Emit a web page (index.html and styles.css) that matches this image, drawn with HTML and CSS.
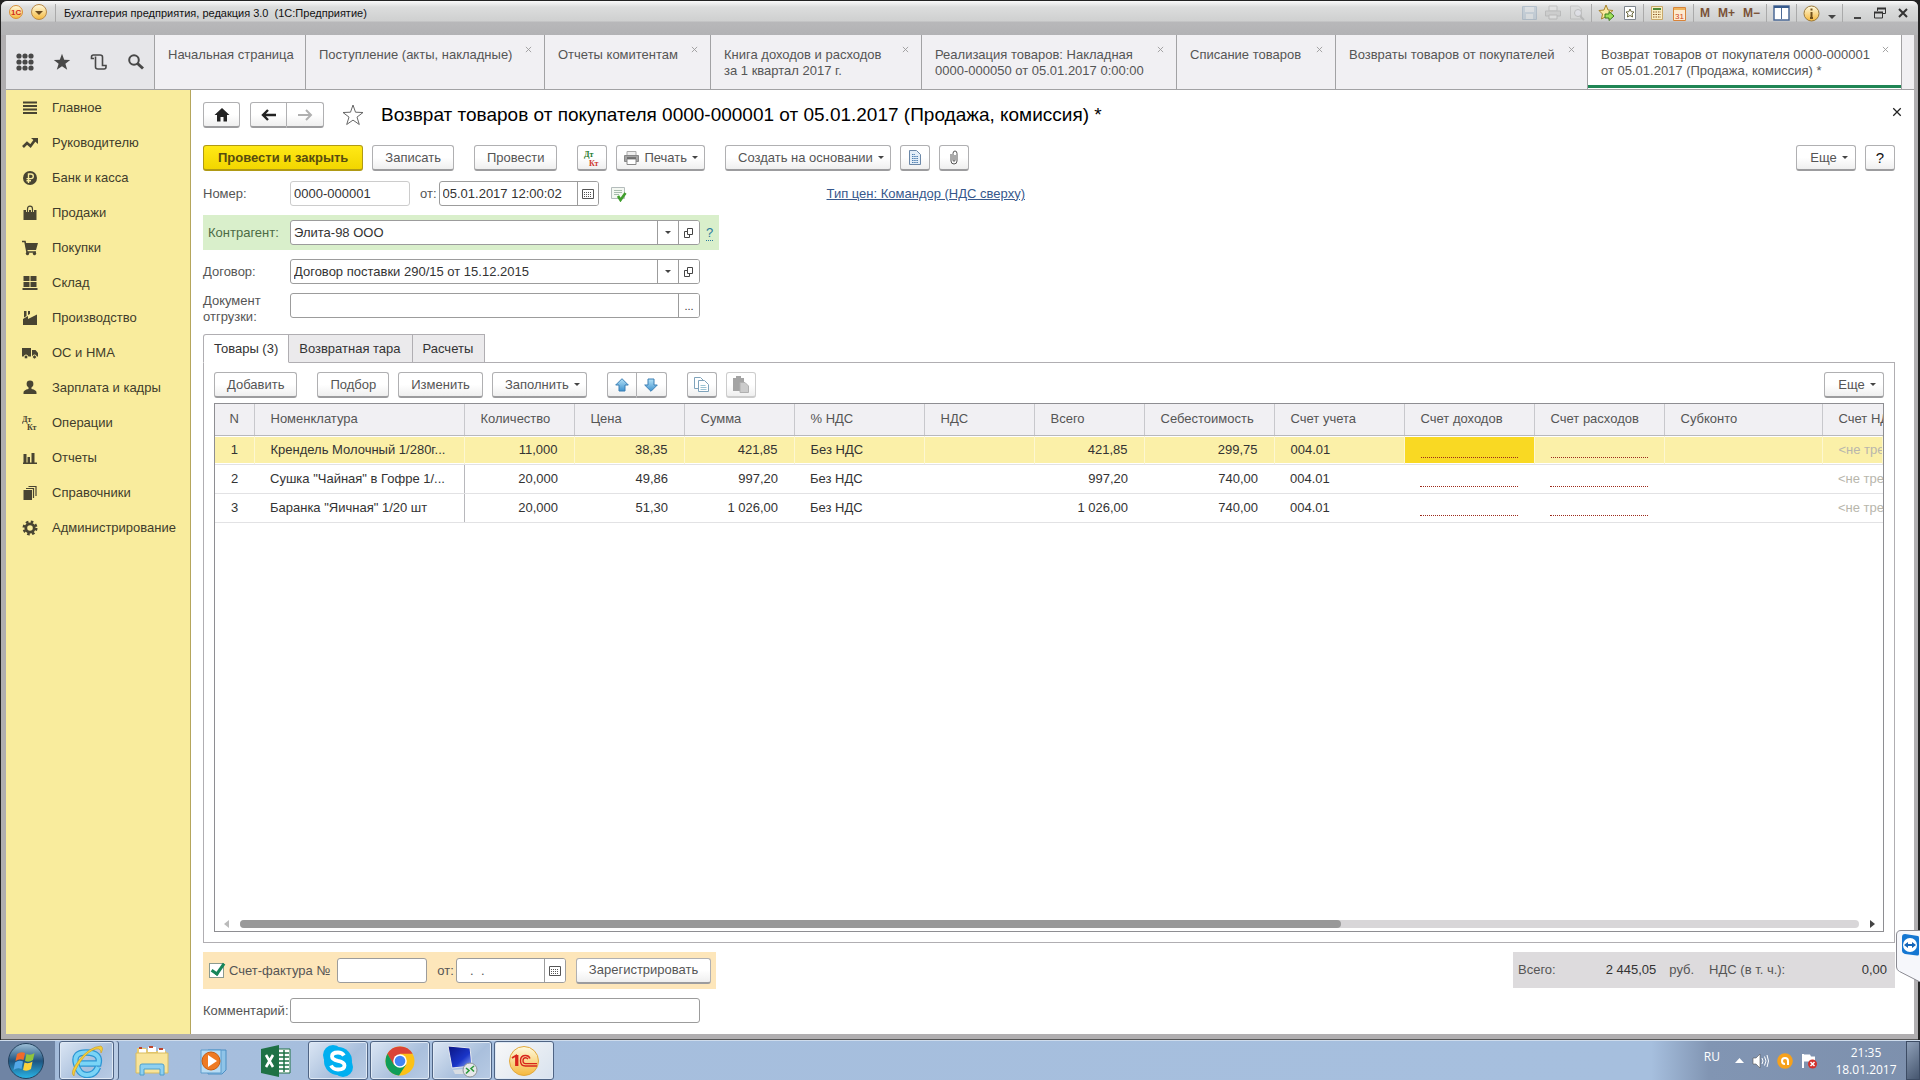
FILE: index.html
```html
<!DOCTYPE html>
<html lang="ru">
<head>
<meta charset="utf-8">
<title>Бухгалтерия предприятия, редакция 3.0</title>
<link rel="stylesheet" href="styles.css">
</head>
<body>
<svg class="defs" aria-hidden="true">
  <defs>
    <linearGradient id="gold" x1="0" y1="0" x2="0" y2="1"><stop offset="0" stop-color="#fffbe0"/><stop offset="1" stop-color="#f5b83c"/></linearGradient>
    <linearGradient id="orb" x1="0" y1="0" x2="0" y2="1"><stop offset="0" stop-color="#9fc0d8"/><stop offset=".5" stop-color="#1f5480"/><stop offset="1" stop-color="#29b6e8"/></linearGradient>
    <linearGradient id="arrow" x1="0" y1="0" x2="0" y2="1"><stop offset="0" stop-color="#b5e2f7"/><stop offset="1" stop-color="#3f93cf"/></linearGradient>
    <linearGradient id="screen" x1="0" y1="0" x2="1" y2="1"><stop offset="0" stop-color="#0a1480"/><stop offset=".6" stop-color="#1a35c8"/><stop offset="1" stop-color="#9db6f5"/></linearGradient>
    <symbol id="i-cal" viewBox="0 0 12 12"><path d="M.5 1.500h11v9H.5z" fill="#fff" stroke="#555"/><path d="M2 4.500h8M2 6.500h8M2 8.500h8" stroke="#555" stroke-dasharray="1 1"/></symbol>
    <symbol id="i-open" viewBox="0 0 10 12"><path d="M3.500 1.500h5v6h-5zM3 4.500H.5v6h5V8" fill="none" stroke="#444"/></symbol>
    <symbol id="i-x" viewBox="0 0 8 8"><path d="M1 1l6 6M7 1L1 7" fill="none" stroke="currentColor"/></symbol>
  </defs>
</svg>

<div class="window">
  <header class="titlebar">
    <svg width="14" height="16" viewBox="0 0 14 16"><circle cx="7" cy="8" r="6.500" fill="url(#gold)" stroke="#d9903a"/><text x="2" y="11" class="logo-s">1С</text></svg>
    <svg width="16" height="16" viewBox="0 0 16 16"><circle cx="8" cy="8" r="7.500" fill="url(#gold)" stroke="#b98a4a"/><path d="M4 7h8l-4 4z" fill="#6a4a20"/></svg>
    <i class="sep"></i>
    <h1 class="app-title">Бухгалтерия предприятия, редакция 3.0&nbsp; (1С:Предприятие)</h1>
    <div class="sys">
      <svg class="dim" width="15" height="16" viewBox="0 0 15 16"><path d="M.5 1.500h14v13H.5z" fill="#9fb8d0" stroke="#6d8cab"/><path d="M3 2h9v5H3zM4 9h7v5H4z" fill="#dfe7ee"/></svg>
      <svg class="dim" width="16" height="16" viewBox="0 0 16 16"><path d="M4 1h8v5H4z" fill="#eee" stroke="#888"/><path d="M.5 6h15v5H.5z" fill="#bbb" stroke="#888"/><path d="M4 10h8v4H4z" fill="#eee" stroke="#888"/></svg>
      <svg class="dim" width="16" height="16" viewBox="0 0 16 16"><path d="M1.500 1h8l3 3v10h-11z" fill="#ddd" stroke="#999"/><circle cx="9" cy="8" r="3.500" fill="#eef" stroke="#888"/><path d="M11 11l4 4" stroke="#888" stroke-width="2"/></svg>
      <i class="sep"></i>
      <svg width="17" height="18" viewBox="0 0 17 18"><path d="M8 1l2 5 5 .5-4 3.500 1 5-4-2.500L3.500 15l1-5L1 6.500 6 6z" fill="#fbe9a0" stroke="#a8842c"/><path d="M7 10h4V7.500l5 4.500-5 4.500V14H7z" fill="#9fe05a" stroke="#3c7a1c"/></svg>
      <svg width="14" height="16" viewBox="0 0 14 16"><path d="M1.500 1.500h11v13h-11z" fill="#fff" stroke="#7e868e"/><path d="M7 4l1.200 2.700 2.800.3-2 2 .6 3L7 10.500 4.400 12 5 9 3 7l2.800-.3z" fill="none" stroke="#6c6a40"/></svg>
      <i class="sep"></i>
      <svg width="14" height="16" viewBox="0 0 14 16"><path d="M1.500 1.500h11v13h-11z" fill="#fbeec4" stroke="#c8a86a"/><path d="M3 4h8" stroke="#4f8a38" stroke-width="2"/><path d="M3 7h8M3 9.500h8M3 12h8" stroke="#8a5a2a" stroke-dasharray="1.500 1"/></svg>
      <svg width="15" height="17" viewBox="0 0 15 17"><path d="M1.500 2.500h12v13h-12z" fill="#fdebd0" stroke="#d8843a"/><path d="M2 3h11v2H2z" fill="#f0b45c"/><text x="3" y="14" class="cal-num">31</text></svg>
      <i class="sep"></i>
      <span class="mem">M</span><span class="mem">M+</span><span class="mem">M−</span>
      <i class="sep"></i>
      <svg width="17" height="16" viewBox="0 0 17 16"><path d="M1 1h15v14H1z" fill="#fff" stroke="#4c6a96" stroke-width="1.500"/><path d="M1 2h15" stroke="#35598c" stroke-width="2"/><path d="M8.500 3v11" stroke="#4c6a96"/></svg>
      <i class="sep"></i>
      <svg width="17" height="17" viewBox="0 0 17 17"><circle cx="8.500" cy="8.500" r="7.500" fill="url(#gold)" stroke="#9c7a3c"/><path d="M8.500 3.500v2M8.500 7v6M7 13h3" stroke="#70501c" stroke-width="2"/></svg>
      <svg width="8" height="16" viewBox="0 0 8 16"><path d="M0 10h8l-4 4z" fill="#444"/></svg>
      <i class="sep"></i>
      <div class="winbtns">
        <svg width="10" height="14" viewBox="0 0 10 14"><path d="M1 12h7" stroke="#444" stroke-width="2"/></svg>
        <svg width="12" height="12" viewBox="0 0 12 12"><path d="M3.500 4V1.500h8v5H9" fill="none" stroke="#333"/><path d="M3 1.500h9M0 5.500h9" stroke="#333" stroke-width="2"/><path d="M.5 5v6h8V5" fill="none" stroke="#333"/></svg>
        <svg width="12" height="12" viewBox="0 0 12 12"><path d="M2 2l8 8M10 2l-8 8" stroke="#333" stroke-width="2"/></svg>
      </div>
    </div>
  </header>

  <nav class="tabs">
    <div class="tools">
      <svg width="18" height="18" viewBox="0 0 18 18"><g fill="#484848"><circle cx="3" cy="3" r="2.600"/><circle cx="9" cy="3" r="2.600"/><circle cx="15" cy="3" r="2.600"/><circle cx="3" cy="9" r="2.600"/><circle cx="9" cy="9" r="2.600"/><circle cx="15" cy="9" r="2.600"/><circle cx="3" cy="15" r="2.600"/><circle cx="9" cy="15" r="2.600"/><circle cx="15" cy="15" r="2.600"/></g></svg>
      <svg width="18" height="18" viewBox="0 0 18 18"><path d="M9 .8l2.200 5.900 6 .2-4.800 3.800 1.800 6.100L9 13.300l-5.200 3.500 1.800-6.100L.8 6.900l6-.2z" fill="#484848"/></svg>
      <svg width="18" height="18" viewBox="0 0 18 18"><path d="M4 5.500H1.500V4q0-2 2-2H10q2.500 0 2.500 2v8.500H16V14q0 2-2 2H8q-2.500 0-2.500-2V3.500" fill="none" stroke="#484848" stroke-width="1.600"/></svg>
      <svg width="18" height="18" viewBox="0 0 18 18"><circle cx="7" cy="7" r="4.800" fill="none" stroke="#484848" stroke-width="2"/><path d="M10.500 10.500l5.500 5" stroke="#484848" stroke-width="3"/></svg>
    </div>
    <a class="tab" href="#">Начальная страница</a>
    <a class="tab" href="#">Поступление (акты, накладные)<svg class="tab-x"><use href="#i-x"/></svg></a>
    <a class="tab" href="#">Отчеты комитентам<svg class="tab-x"><use href="#i-x"/></svg></a>
    <a class="tab" href="#">Книга доходов и расходов<br>за 1 квартал 2017 г.<svg class="tab-x"><use href="#i-x"/></svg></a>
    <a class="tab" href="#">Реализация товаров: Накладная<br>0000-000050 от 05.01.2017 0:00:00<svg class="tab-x"><use href="#i-x"/></svg></a>
    <a class="tab" href="#">Списание товаров<svg class="tab-x"><use href="#i-x"/></svg></a>
    <a class="tab" href="#">Возвраты товаров от покупателей<svg class="tab-x"><use href="#i-x"/></svg></a>
    <a class="tab active" href="#">Возврат товаров от покупателя 0000-000001<br>от 05.01.2017 (Продажа, комиссия) *<svg class="tab-x"><use href="#i-x"/></svg></a>
  </nav>

  <div class="work">
    <aside class="side">
      <a href="#"><svg viewBox="0 0 16 16"><path d="M1 2.500h14M1 6h14M1 9.500h14M1 13h14" stroke="#484432" stroke-width="2"/></svg>Главное</a>
      <a href="#"><svg viewBox="0 0 16 16"><path d="M1 12l4-4 3.500 3L13 5" fill="none" stroke="#484432" stroke-width="2.600"/><path d="M9 3h7v6z" fill="#484432"/></svg>Руководителю</a>
      <a href="#"><svg viewBox="0 0 16 16"><circle cx="8" cy="8" r="7" fill="#484432"/><path d="M6.500 13V4H9q2.300 0 2.300 2.300T9 8.600H4.500M4.500 10.700H9" fill="none" stroke="#f9ec9d" stroke-width="1.400"/></svg>Банк и касса</a>
      <a href="#"><svg viewBox="0 0 16 16"><path d="M1.500 5h13v10h-13z" fill="#484432"/><path d="M5.500 7V4q0-2.800 2.500-2.800T10.500 4v3" fill="none" stroke="#f9ec9d" stroke-width="3"/><path d="M5.500 7V4q0-2.800 2.500-2.800T10.500 4v3" fill="none" stroke="#484432" stroke-width="1.200"/></svg>Продажи</a>
      <a href="#"><svg viewBox="0 0 16 16"><path d="M0 1.500h3L5 12h9" fill="none" stroke="#484432" stroke-width="1.600"/><path d="M3 3h13l-2 7H4.500z" fill="#484432"/><circle cx="5.500" cy="13.500" r="1.700" fill="#484432"/><circle cx="12.500" cy="13.500" r="1.700" fill="#484432"/></svg>Покупки</a>
      <a href="#"><svg viewBox="0 0 16 16"><path d="M1.500 1h6v5h-6zM8.500 1h6v5h-6zM1.500 7h6v5h-6zM8.500 7h6v5h-6zM.5 13h15v2H.5z" fill="#484432"/></svg>Склад</a>
      <a href="#"><svg viewBox="0 0 16 16"><path d="M1 15V9l5-3v3l9-4.500V15zM2 1h2.500v5L2 7.500zM6 1h2v3L6 5z" fill="#484432"/></svg>Производство</a>
      <a href="#"><svg viewBox="0 0 16 16"><path d="M0 3h9v8.500H0zM10 5h3.500L16 8v3.500h-6z" fill="#484432"/><circle cx="4" cy="12" r="2" fill="#484432" stroke="#f9ec9d"/><circle cx="12.500" cy="12" r="2" fill="#484432" stroke="#f9ec9d"/></svg>ОС и НМА</a>
      <a href="#"><svg viewBox="0 0 16 16"><circle cx="8" cy="4" r="3.400" fill="#484432"/><path d="M6.500 7h3v2q5 1 5 3.500V14h-13v-1.500Q1.500 10 6.500 9z" fill="#484432"/></svg>Зарплата и кадры</a>
      <a href="#"><svg viewBox="0 0 16 16"><text x="0" y="7" class="dk">Дт</text><text x="5" y="15" class="dk">Кт</text></svg>Операции</a>
      <a href="#"><svg viewBox="0 0 16 16"><path d="M1.500 4h3v9h-3zM5.500 7h2.500v6H5.500zM9.500 3h3v10h-3zM1 12.500h14V14H1z" fill="#484432"/></svg>Отчеты</a>
      <a href="#"><svg viewBox="0 0 16 16"><path d="M1.500 5h8.500v10H1.500z" fill="#484432"/><path d="M4 3.500h7.500V13M6.500 1.500h7.500V11" fill="none" stroke="#484432" stroke-width="1.200"/></svg>Справочники</a>
      <a href="#"><svg viewBox="0 0 16 16"><circle cx="8" cy="8" r="4.200" fill="none" stroke="#484432" stroke-width="2.800"/><circle cx="8" cy="8" r="6.300" fill="none" stroke="#484432" stroke-width="2.400" stroke-dasharray="2.600 2.350"/></svg>Администрирование</a>
    </aside>

    <main class="main">
      <div class="head">
        <button class="btn ic home" aria-label="Домой"><svg width="16" height="14" viewBox="0 0 16 14"><path d="M8 0l7.500 7H13v6.500H9.500V9h-3v4.500H3V7H.5z" fill="#222"/></svg></button>
        <div class="pair nav">
          <button class="btn ic" aria-label="Назад"><svg width="16" height="12" viewBox="0 0 16 12"><path d="M15 6H3M7 1L2 6l5 5" fill="none" stroke="#222" stroke-width="2.400"/></svg></button><button class="btn ic" aria-label="Вперед"><svg width="16" height="12" viewBox="0 0 16 12"><path d="M1 6h12M9 1l5 5-5 5" fill="none" stroke="#b0b0b0" stroke-width="2"/></svg></button>
        </div>
        <svg class="fav" width="24" height="24" viewBox="0 0 24 24"><path d="M12 2l2.500 7.200 7.500.3-6 4.600 2.300 7.400-6.300-4.400-6.300 4.400L8 14.100 2 9.500l7.500-.3z" fill="#fff" stroke="#666"/></svg>
        <h2>Возврат товаров от покупателя 0000-000001 от 05.01.2017 (Продажа, комиссия) *</h2>
        <button class="plain close" aria-label="Закрыть"><svg width="10" height="10" viewBox="0 0 8 8"><use href="#i-x"/></svg></button>
      </div>

      <div class="bar cmd">
        <button class="btn primary">Провести и закрыть</button>
        <button class="btn">Записать</button>
        <i class="gap"></i>
        <button class="btn">Провести</button>
        <i class="gap"></i>
        <button class="btn ic" aria-label="Дт/Кт"><svg width="18" height="18" viewBox="0 0 18 18"><text x="1" y="8" class="dk green">Дт</text><text x="6" y="17" class="dk red">Кт</text></svg></button>
        <button class="btn dd print"><svg width="15" height="14" viewBox="0 0 15 14"><path d="M3 .5h9v5H3z" fill="#eee" stroke="#aaa"/><path d="M.5 4.500h14v6H.5z" fill="#a4a4a4" stroke="#888"/><path d="M3 8h9v5.500H3z" fill="#fff" stroke="#888"/><path d="M3 7h9" stroke="#444"/></svg>Печать</button>
        <i class="gap"></i>
        <button class="btn dd">Создать на основании</button>
        <button class="btn ic" aria-label="Отчет"><svg width="12" height="15" viewBox="0 0 12 15"><path d="M.5.5h7l4 4v10H.5z" fill="#e4eef8" stroke="#6c88a8"/><path d="M3 4.500h3M3 6.500h6M3 8.500h6M3 10.500h6M3 12.500h6" stroke="#4a7cae" stroke-dasharray="1.500 .7"/></svg></button>
        <button class="btn ic" aria-label="Файлы"><svg width="8" height="15" viewBox="0 0 8 15"><path d="M1 4v7q0 3 3 3t3-3V3.500Q7 1 5 1T3 3.500V10q0 1.300 1 1.300T5 10V5" fill="none" stroke="#555"/></svg></button>
        <span class="grow"></span>
        <button class="btn dd">Еще</button>
        <button class="btn ic help">?</button>
      </div>

      <form class="fields">
        <div class="row">
          <label class="lab" for="num">Номер:</label>
          <input id="num" class="box num" value="0000-000001" readonly>
          <label class="ot" for="date">от:</label>
          <span class="combo date"><input id="date" value="05.01.2017 12:00:02"><button type="button" aria-label="Календарь"><svg width="12" height="12"><use href="#i-cal"/></svg></button></span>
          <svg class="posted" width="17" height="16" viewBox="0 0 17 16"><path d="M1.500 1.500h13v11h-13z" fill="#f4f8f2" stroke="#b4bcbc"/><path d="M4 4.500h8M4 6.500h8M4 8.500h5" stroke="#a8bcae"/><path d="M8 10l2.500 4 5-7" fill="none" stroke="#3f9e2c" stroke-width="2.600"/></svg>
          <a class="price" href="#">Тип цен: Командор (НДС сверху)</a>
        </div>
        <div class="row green-row">
          <label class="lab" for="agent">Контрагент:</label>
          <span class="combo wide"><input id="agent" value="Элита-98 ООО"><button type="button" class="caret" aria-label="Выбрать"></button><button type="button" aria-label="Открыть"><svg width="10" height="12"><use href="#i-open"/></svg></button></span>
          <a class="q" href="#">?</a>
        </div>
        <div class="row">
          <label class="lab" for="deal">Договор:</label>
          <span class="combo wide"><input id="deal" value="Договор поставки 290/15 от 15.12.2015"><button type="button" class="caret" aria-label="Выбрать"></button><button type="button" aria-label="Открыть"><svg width="10" height="12"><use href="#i-open"/></svg></button></span>
        </div>
        <div class="row ship">
          <label class="lab" for="ship">Документ отгрузки:</label>
          <span class="combo wide"><input id="ship"><button type="button" class="dots">...</button></span>
        </div>
      </form>

      <div class="pages"><button class="page on">Товары (3)</button><button class="page">Возвратная тара</button><button class="page">Расчеты</button></div>
      <section class="panel">
        <div class="bar">
          <button class="btn">Добавить</button>
          <i class="gap"></i>
          <button class="btn">Подбор</button>
          <button class="btn">Изменить</button>
          <button class="btn dd">Заполнить</button>
          <i class="gap"></i>
          <div class="pair">
            <button class="btn ic" aria-label="Вверх"><svg width="14" height="14" viewBox="0 0 14 14"><path d="M7 .7L13.300 7H10v6H4V7H.7z" fill="url(#arrow)" stroke="#3a7eb4"/></svg></button><button class="btn ic" aria-label="Вниз"><svg width="14" height="14" viewBox="0 0 14 14"><path d="M7 13.300L13.300 7H10V1H4v6H.7z" fill="url(#arrow)" stroke="#3a7eb4"/></svg></button>
          </div>
          <i class="gap"></i>
          <button class="btn ic" aria-label="Копировать"><svg width="15" height="15" viewBox="0 0 15 15"><path d="M.5.500h6l3 3v8h-9z" fill="#fff" stroke="#7fa3bb"/><path d="M4.500 3.500h6l4 4v7h-10z" fill="#fff" stroke="#7fa3bb"/><path d="M6.500 8.500h5M6.500 10.500h6M6.500 12.500h6" stroke="#9cc4d4"/></svg></button>
          <button class="btn ic off" aria-label="Вставить" disabled><svg width="16" height="17" viewBox="0 0 16 17"><path d="M0 2h11v13H0zM3 0h5v3H3z" fill="#a4a4a4"/><path d="M7 6.500h5l3.500 3.500v6.500H7z" fill="#ccc" stroke="#b0b0b0"/></svg></button>
          <span class="grow"></span>
          <button class="btn dd">Еще</button>
        </div>
        <div class="grid">
          <table>
            <colgroup><col class="c39"><col class="c210"><col class="c110"><col class="c110"><col class="c110"><col class="c130"><col class="c110"><col class="c110"><col class="c130"><col class="c130"><col class="c130"><col class="c130"><col class="c158"><col></colgroup>
            <thead><tr><th>N</th><th>Номенклатура</th><th>Количество</th><th>Цена</th><th>Сумма</th><th>% НДС</th><th>НДС</th><th>Всего</th><th>Себестоимость</th><th>Счет учета</th><th>Счет доходов</th><th>Счет расходов</th><th>Субконто</th><th>Счет НДС</th></tr></thead>
            <tbody>
              <tr class="sel"><td>1</td><td>Крендель Молочный 1/280г...</td><td class="r">11,000</td><td class="r">38,35</td><td class="r">421,85</td><td>Без НДС</td><td></td><td class="r">421,85</td><td class="r">299,75</td><td>004.01</td><td class="cur"><i class="req"></i></td><td><i class="req"></i></td><td></td><td class="na">&lt;не требуется&gt;</td></tr>
              <tr><td>2</td><td>Сушка "Чайная" в Гофре 1/...</td><td class="r">20,000</td><td class="r">49,86</td><td class="r">997,20</td><td>Без НДС</td><td></td><td class="r">997,20</td><td class="r">740,00</td><td>004.01</td><td><i class="req"></i></td><td><i class="req"></i></td><td></td><td class="na">&lt;не требуется&gt;</td></tr>
              <tr><td>3</td><td>Баранка "Яичная" 1/20 шт</td><td class="r">20,000</td><td class="r">51,30</td><td class="r">1 026,00</td><td>Без НДС</td><td></td><td class="r">1 026,00</td><td class="r">740,00</td><td>004.01</td><td><i class="req"></i></td><td><i class="req"></i></td><td></td><td class="na">&lt;не требуется&gt;</td></tr>
            </tbody>
          </table>
          <div class="scroll">
            <svg width="5" height="8" viewBox="0 0 5 8"><path d="M5 0v8L0 4z" fill="#bbb"/></svg>
            <div class="track"><div class="thumb"></div></div>
            <svg width="5" height="8" viewBox="0 0 5 8"><path d="M0 0v8l5-4z" fill="#444"/></svg>
          </div>
        </div>
      </section>

      <div class="foot">
        <div class="invoice">
          <input type="checkbox" id="inv" checked><label for="inv">Счет-фактура №</label>
          <input class="box invnum" aria-label="Номер счета-фактуры">
          <label class="ot" for="invdate">от:</label>
          <span class="combo invdate"><input id="invdate" value="  .  ."><button type="button" aria-label="Календарь"><svg width="12" height="12"><use href="#i-cal"/></svg></button></span>
          <button class="btn reg">Зарегистрировать</button>
        </div>
        <div class="totals"><span>Всего:</span><b class="sum">2 445,05</b><span>руб.</span><span>НДС (в т. ч.):</span><b class="vat">0,00</b></div>
      </div>
      <div class="row comment">
        <label class="lab" for="comm">Комментарий:</label>
        <input id="comm" class="box wide">
      </div>
    </main>
  </div>
</div>

<div class="tv"><svg width="24" height="52" viewBox="0 0 24 52"><path d="M24 .5H5Q.5.500.5 5v32q0 3 3 4.500L24 52" fill="#f6f7fb" stroke="#8a8a92"/><path d="M6 7q0-3 3-3l13 2q1 0 1 2v16q0 2-2 1.500L9 24q-3-1-3-3z" fill="#1577d2"/><circle cx="14" cy="15" r="7" fill="#fff"/><path d="M8 15l4-3v2h4v-2l4 3-4 3v-2h-4v2z" fill="#1565b8"/></svg></div>

<footer class="taskbar">
  <button class="start" aria-label="Пуск"><svg width="38" height="38" viewBox="0 0 38 38"><circle cx="19" cy="19" r="17.500" fill="url(#orb)" stroke="#24425f"/><path d="M10 12q4-3 8-1l-1.500 7q-4-2-8 1z" fill="#f06a2a"/><path d="M19.500 12q4 2 8-1L26 18q-4 3-8 1z" fill="#8fc43c"/><path d="M8 20.500q4-3 8-1L14.500 27q-4-2-8 1z" fill="#52a8e8"/><path d="M17.500 20.500q4 2 8-1L24 27q-4 3-8 1z" fill="#fbd23c"/></svg></button>
  <button class="task lit ie" aria-label="Internet Explorer"><svg width="34" height="34" viewBox="0 0 34 34"><path d="M28 23q-3 8-11 8T6 19.500 17 8.500t11.500 11H10" fill="none" stroke="#2c96d4" stroke-width="6.500"/><path d="M28 23q-3 8-11 8T6 19.500 17 8.500t11.500 11H10" fill="none" stroke="#7ad4f6" stroke-width="4"/><path d="M4 32Q-1 29 9 16T31 2q3 2 0 7 0-5-5-4-8 2-15 12T4 32z" fill="#f6cf3a" stroke="#c99b1c" stroke-width=".6"/></svg></button>
  <button class="task" aria-label="Проводник"><svg width="34" height="34" viewBox="0 0 34 34"><path d="M2 4h9l2 3h18v22H2z" fill="#e8cc72"/><path d="M4 5h7v4H4zM13 3h8v5h-8zM23 5h7v4h-7z" fill="#fff"/><path d="M4 4h3M14 3h4M24 5h4" stroke="#c0452c" stroke-width="2"/><path d="M1 9h32v20H1z" fill="#f8e49a" stroke="#d8bc62"/><path d="M5 31v-9q0-2 2-2h20q2 0 2 2v9h-4v-6H9v6z" fill="#8ed0f0" stroke="#4fa0cc"/></svg></button>
  <button class="task" aria-label="Проигрыватель"><svg width="30" height="30" viewBox="0 0 30 30"><path d="M9 4h18v20l-4 4H9z" fill="#8fc4e8" stroke="#4d8fc4"/><path d="M2 4h20v23H2z" fill="#b8dcf4" stroke="#5c9ccc"/><circle cx="12" cy="15" r="9" fill="#ef7a22" stroke="#c85c10"/><path d="M9 9l9 6-9 6z" fill="#fff"/></svg></button>
  <button class="task" aria-label="Excel"><svg width="32" height="34" viewBox="0 0 32 34"><path d="M18 5h12v24H18z" fill="#fff" stroke="#1e7145"/><path d="M19 9h10M19 13h10M19 17h10M19 21h10M19 25h10M24 6v22" stroke="#1e7145" stroke-width="1.500"/><path d="M1 5l18-4v32L1 29z" fill="#1e7145"/><path d="M6 11l7 12M13 11L6 23" stroke="#fff" stroke-width="2.600"/></svg></button>
  <button class="task lit" aria-label="Skype"><svg width="32" height="34" viewBox="0 0 32 34"><circle cx="11" cy="11" r="10" fill="#00aff0"/><circle cx="21" cy="23" r="10" fill="#00aff0"/><circle cx="16" cy="17" r="14" fill="#00aff0"/><path d="M22 11.500Q20 8.500 16 8.500q-6 0-6 4 0 3 6 4.300 6.500 1.200 6.500 4.700 0 4-6.500 4-5 0-7-4" fill="none" stroke="#fff" stroke-width="3.800"/></svg></button>
  <button class="task lit" aria-label="Chrome"><svg width="32" height="32" viewBox="0 0 32 32"><circle cx="16" cy="16" r="14.500" fill="#fbc116"/><path d="M3.400 8.800A14.500 14.500 0 0 1 28.600 8.800H16L9.500 20z" fill="#db4437"/><path d="M3.400 8.800A14.500 14.500 0 0 0 15 30.500L22.200 19.500 9.800 19.600z" fill="#0f9d58"/><circle cx="16" cy="16" r="6.800" fill="#fff"/><circle cx="16" cy="16" r="5.300" fill="#4285f4"/></svg></button>
  <button class="task lit" aria-label="Удаленный рабочий стол"><svg width="34" height="36" viewBox="0 0 34 36"><path d="M3 3l22 2 2 18-20 2z" fill="url(#screen)" stroke="#e4e8ee"/><path d="M8 27l10-1 4 5H10z" fill="#d9dde2"/><circle cx="25" cy="27" r="7" fill="#e6e8ea" stroke="#8e9498"/><path d="M21 25l3 2.500-3 3M29 23l-3 2.500 3 3" fill="none" stroke="#2f9a3c" stroke-width="1.600"/></svg></button>
  <button class="task lit hot" aria-label="1С:Предприятие"><svg width="32" height="32" viewBox="0 0 32 32"><circle cx="16" cy="16" r="14.500" fill="url(#gold)" stroke="#e2a83c"/><path d="M4 13l4-2.500V21M9.500 10v11" fill="none" stroke="#d8261c" stroke-width="1.800"/><path d="M22 13.500Q21 10.500 17.500 10.500 12.500 10.500 12.500 15.700T17.500 21H29M20 14q-.8-1.200-2.500-1.200-2.500 0-2.500 2.900t2.500 2.900H29" fill="none" stroke="#d8261c" stroke-width="1.400"/></svg></button>
  <div class="tray">
    <span class="lang">RU</span>
    <svg width="9" height="6" viewBox="0 0 9 6"><path d="M4.500 0L9 5H0z" fill="#fff"/></svg>
    <svg width="17" height="16" viewBox="0 0 17 16"><path d="M1 5h3l4-4v14l-4-4H1z" fill="#fff" stroke="#555" stroke-width=".6"/><path d="M10 5q2 3 0 6M12.500 3.500q3 4.500 0 9M15 2q3 6 0 12" fill="none" stroke="#fff"/></svg>
    <svg width="16" height="16" viewBox="0 0 16 16"><circle cx="8" cy="8" r="7.800" fill="#f6a11c"/><path d="M11 12V8q0-3-3-3T5 8t3 3" fill="none" stroke="#fff" stroke-width="2"/></svg>
    <svg width="17" height="16" viewBox="0 0 17 16"><path d="M2 1v14" stroke="#fff" stroke-width="2"/><path d="M3 1.500h6l1 2h4v6H9l-1-1H3z" fill="#fff"/><circle cx="11.500" cy="11" r="4.500" fill="#d4302a"/><path d="M9.500 9l4 4M13.500 9l-4 4" stroke="#fff" stroke-width="1.500"/></svg>
    <time class="clock">21:35<br>18.01.2017</time>
  </div>
  <div class="desk"></div>
</footer>
</body>
</html>
```
FILE: styles.css
```css
* { box-sizing: border-box; }
body {
  margin: 0;
  height: 100vh;
  display: flex;
  flex-direction: column;
  overflow: hidden;
  background: #222;
  font: 13px/16px "Liberation Sans", Arial, sans-serif;
  color: #333;
}
button, input { font: inherit; color: inherit; margin: 0; }
h1, h2 { margin: 0; font-weight: normal; }
a { color: inherit; text-decoration: none; }
svg { flex: none; display: block; }
i { font-style: normal; }
.defs { position: absolute; width: 0; height: 0; }

/* window frame */
.window {
  flex: 1;
  min-height: 0;
  display: flex;
  flex-direction: column;
  margin: 1px 2px 0 1px;
  padding: 0 4px 5px 5px;
  background: #b0aeb0;
  border-radius: 6px 6px 0 0;
  border-bottom: 1px solid #555;
}
.titlebar {
  height: 34px;
  flex: none;
  display: flex;
  align-items: flex-start;
  gap: 8px;
  margin: 0 -4px 0 -5px;
  padding: 3px 9px 0 8px;
  border-radius: 6px 6px 0 0;
  background: linear-gradient(#fafafa 0, #dcdddd 6px, #cfd0d0 20px, #b8b8ba 21px, #b2b2b4 100%);
}
.app-title { font-size: 11px; line-height: 18px; color: #111; }
.sep { width: 1px; height: 18px; background: #aaa; }
.logo-s { font: bold 8px "Liberation Sans", sans-serif; fill: #d32a1c; }
.sys { margin-left: auto; display: flex; align-items: center; gap: 8px; height: 18px; }
.sys .sep { margin: 0 -2px; }
.dim { opacity: .35; }
.mem { font-size: 12px; font-weight: bold; color: #7a5238; }
.cal-num { font: 8px "Liberation Sans", sans-serif; fill: #d0431c; }
.winbtns { display: flex; align-items: center; gap: 11px; margin-left: 4px; }

/* open documents */
.tabs {
  height: 55px;
  flex: none;
  display: grid;
  grid-template-columns: 149px 151px 239px 166px 211px 255px 159px 252px 314px 1fr;
  background: #f1f0f3;
  border-bottom: 1px solid #a2a2a4;
}
.tools { display: flex; align-items: center; gap: 19px; padding-left: 10px; background: #e6e6e9; border-right: 1px solid #a2a2a4; }
.tab { position: relative; padding: 12px 0 0 13px; border-right: 1px solid #a2a2a4; color: #555; white-space: nowrap; }
.tab-x { position: absolute; top: 11px; right: 12px; width: 7px; height: 7px; color: #999; }
.tab.active { background: #fff; box-shadow: inset 0 -1px #fff, inset 0 -4px #1f8554; }

.work { flex: 1; min-height: 0; display: flex; }
.side { width: 185px; flex: none; background: #f9ec9d; border-right: 1px solid #b5a65c; }
.side a { display: flex; align-items: center; gap: 14px; height: 35px; padding-left: 16px; color: #3f3c2c; }
.side svg { width: 16px; height: 16px; }
.dk { font: bold 8px "Liberation Serif", serif; fill: #484432; }
.dk.green { fill: #1f7a2c; }
.dk.red { fill: #d03a30; }

.main { flex: 1; min-width: 0; display: flex; flex-direction: column; padding: 12px 19px 11px 12px; background: #fff; }

/* buttons */
.btn {
  height: 26px;
  padding: 0 12px;
  border: 1px solid #b0b0b2;
  border-bottom: 2px solid #9c9c9e;
  border-radius: 3px;
  background: linear-gradient(#fff 50%, #efefef);
  color: #555;
  white-space: nowrap;
  display: flex;
  align-items: center;
  justify-content: center;
  gap: 5px;
}
.btn.primary { padding: 0 14px; background: linear-gradient(#ffe916, #f2d600); border-color: #b09a14; color: #574c0e; font-weight: bold; }
.btn.ic { width: 30px; padding: 0; }
.btn.dd { padding: 0 6px 0 12px; min-width: 60px; }
.btn.print { padding-left: 7px; }
.dd::after, .caret::after { content: ""; border: 3px solid transparent; border-top: 3px solid #444; border-bottom: 0; }
.btn.off { border-color: #ccc; }
.help { font-size: 15px; color: #111; }
.pair { display: flex; }
.pair .btn:first-child { border-radius: 3px 0 0 3px; border-right-width: 1px; }
.pair .btn:last-child { border-radius: 0 3px 3px 0; border-left: 0; }
.plain { border: 0; background: none; padding: 0; }

.head { display: flex; align-items: center; height: 26px; }
.head .home { width: 37px; }
.nav { margin-left: 10px; }
.nav .btn { width: 37px; }
.fav { margin: 0 16px 0 17px; }
.head h2 { font-size: 19px; line-height: 26px; color: #000; white-space: nowrap; }
.close { margin: -6px -7px 0 auto; color: #222; }
.bar { display: flex; gap: 9px; }
.cmd { margin-top: 17px; }
.gap { width: 2px; }
.grow { flex: 1; }

/* form fields */
.fields { display: flex; flex-direction: column; margin-top: 9px; }
.row { display: flex; align-items: center; height: 27px; }
.lab { width: 87px; flex: none; color: #555; }
.box { height: 25px; border: 1px solid #9c9c9c; border-radius: 3px; background: #fff; padding: 0 3px; }
.num { width: 120px; border-color: #ccc; }
.ot { margin: 0 2px 0 10px; color: #555; }
.combo { display: flex; height: 25px; border: 1px solid #9c9c9c; border-radius: 3px; background: #fff; overflow: hidden; }
.combo input { flex: 1; min-width: 0; border: 0; padding: 0 3px; background: none; outline: 0; }
.combo button { width: 21px; border: 0; border-left: 1px solid #9c9c9c; background: #fff; padding: 0; display: flex; align-items: center; justify-content: center; }
.date { width: 160px; }
.wide { width: 410px; }
.posted { margin-left: 11px; }
.price { margin-left: 200px; color: #37588c; text-decoration: underline; }
.green-row { width: 516px; height: 35px; margin: 8px 0; background: #d9efcb; }
.green-row .lab { padding-left: 5px; color: #4c6b45; }
.q { margin-left: 6px; color: #2b7a9c; border-bottom: 1px dotted #2b7a9c; line-height: 15px; }
.ship { height: 33px; margin-top: 6px; align-items: flex-start; padding-top: 2px; }
.ship .lab { width: 60px; margin-right: 27px; }
.dots { font-size: 11px; }

/* document pages */
.pages { display: flex; margin: 10px 0 -1px; position: relative; }
.page { height: 29px; padding: 0 11px 0 10px; border: 1px solid #b0aeb2; border-left: 0; background: #ebeaec; }
.page.on { padding: 0 10px; background: #fff; border-left: 1px solid #b0aeb2; border-bottom-color: #fff; border-radius: 3px 0 0 0; }
.panel { flex: 1; min-height: 0; display: flex; flex-direction: column; padding: 9px 10px 10px; border: 1px solid #b0aeb2; }
.grid { flex: 1; min-height: 0; margin-top: 5px; border: 1px solid #8e8e92; display: flex; flex-direction: column; }
table { width: 100%; table-layout: fixed; border-collapse: collapse; }
.c39 { width: 39px; } .c110 { width: 110px; } .c130 { width: 130px; } .c158 { width: 158px; } .c210 { width: 210px; }
th, td { padding: 0 16px; overflow: hidden; white-space: nowrap; text-align: left; }
th:last-child, td:last-child { padding-right: 0; }
th { height: 31px; font-weight: normal; color: #555; background: #f1f0f3; border-bottom: 1px solid #b8b8bc; border-right: 1px solid #c8c8cc; }
th:last-child { border-right: 0; }
td { height: 29px; border-bottom: 1px solid #e2e2e4; }
td:nth-child(2) { border-right: 1px solid #b8b8bc; padding-right: 10px; }
th:nth-child(1), td:nth-child(1) { text-align: center; padding: 0; }
.r { text-align: right; }
.sel td { background: #fbf0a8; border-right: 1px solid #fdf7d0; box-shadow: inset 0 1px #fff, inset 0 -1px #fff; }
.sel td.cur { background: #f9d923; }
.req { display: block; height: 17px; border-bottom: 1px dotted #9c2c1c; }
.na { color: #b8b6ac; }
.scroll { margin-top: auto; display: flex; align-items: center; gap: 11px; padding: 0 8px 1px 9px; height: 14px; }
.track { flex: 1; height: 8px; border-radius: 4px; background: #d8d6d8; }
.thumb { width: 68%; height: 8px; border-radius: 4px; background: #999; }

/* footer */
.foot { display: flex; justify-content: space-between; align-items: flex-start; margin-top: 9px; color: #555; }
.invoice { display: flex; align-items: center; height: 37px; padding: 0 5px 0 6px; background: #fde6ba; }
.invoice input[type=checkbox] {
  appearance: none; width: 15px; height: 15px; margin-right: 5px;
  border: 1px solid #8a9a90; background: #fff;
}
.invoice input[type=checkbox]:checked::after {
  content: ""; display: block; width: 5px; height: 11px; margin: -3px 0 0 4px;
  border: solid #16855a; border-width: 0 3px 3px 0; transform: rotate(35deg);
}
.invnum { width: 90px; margin-left: 7px; }
.invdate { width: 110px; }
.invdate input { white-space: pre; padding-left: 6px; }
.reg { margin-left: 10px; }
.totals { display: flex; align-items: center; height: 36px; width: 382px; padding: 0 8px 0 5px; background: #dddbdd; }
.totals b { font-weight: normal; color: #333; }
.totals span + span { margin-left: 15px; }
.totals .sum { margin: 0 13px 0 50px; }
.totals .vat { margin-left: auto; }
.comment { height: 25px; margin-top: 9px; }

/* remote access flap over the right edge of the window */
.tv { position: absolute; right: 0; bottom: 98px; }

/* taskbar */
.taskbar {
  height: 40px;
  flex: none;
  display: flex;
  align-items: stretch;
  background: linear-gradient(90deg, #7388a8 0, #a6bedd 60px, #a6bfde 86%, #8195b3 89%, #7d90ad 100%);
  border-top: 1px solid #cfdcec;
}
.start { width: 55px; border: 0; padding: 0; background: #6f84a4; display: flex; align-items: center; justify-content: center; margin-right: 4px; }
.start svg { margin-right: 3px; }
.task { width: 60px; border: 1px solid transparent; border-radius: 3px; background: none; padding: 0; display: flex; align-items: center; justify-content: center; margin-right: 2px; }
.task.lit { border-color: #4f6484; background: linear-gradient(135deg, #dbe6f4, #a9bfdc 60%, #b8cbe4); box-shadow: inset 0 0 0 1px #dfe9f5; }
.task.hot { background: linear-gradient(135deg, #f8f8f8, #d8e2ee); }
.task.ie { width: 55px; box-shadow: inset 0 0 0 1px #dfe9f5, 4px 0 #b8cbe4, 5px 0 #4f6484; margin-right: 8px; }
.tray { margin-left: auto; display: flex; align-items: center; gap: 8px; color: #fff; }
.lang { margin: -8px 7px 0 0; font: 12px/16px "Open Sans", sans-serif; }
.clock { width: 80px; text-align: center; font: 12px/17px "Open Sans", sans-serif; }
.desk { width: 14px; border: 1px solid #3d4c64; background: linear-gradient(135deg, #8fa0b8, #46566f); }
```
